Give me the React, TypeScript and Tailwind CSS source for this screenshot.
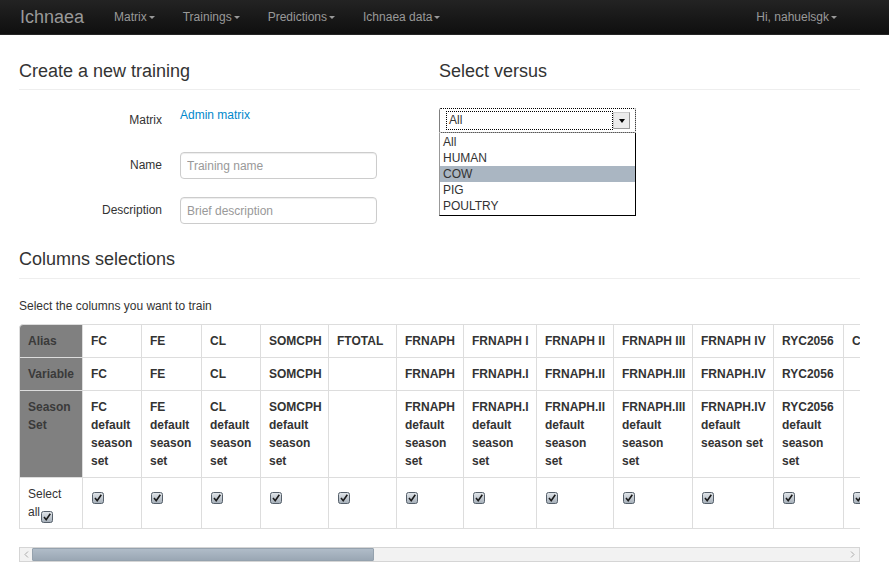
import React from 'react';

type Col = {
  alias: string;
  variable: string;
  season: string[];
  w: string;
};

const columns: Col[] = [
  { alias: 'FC', variable: 'FC', season: ['FC', 'default', 'season', 'set'], w: 'w-[59px]' },
  { alias: 'FE', variable: 'FE', season: ['FE', 'default', 'season', 'set'], w: 'w-[60px]' },
  { alias: 'CL', variable: 'CL', season: ['CL', 'default', 'season', 'set'], w: 'w-[59px]' },
  { alias: 'SOMCPH', variable: 'SOMCPH', season: ['SOMCPH', 'default', 'season', 'set'], w: 'w-[68px]' },
  { alias: 'FTOTAL', variable: '', season: [], w: 'w-[68px]' },
  { alias: 'FRNAPH', variable: 'FRNAPH', season: ['FRNAPH', 'default', 'season', 'set'], w: 'w-[67px]' },
  { alias: 'FRNAPH I', variable: 'FRNAPH.I', season: ['FRNAPH.I', 'default', 'season', 'set'], w: 'w-[73px]' },
  { alias: 'FRNAPH II', variable: 'FRNAPH.II', season: ['FRNAPH.II', 'default', 'season', 'set'], w: 'w-[77px]' },
  { alias: 'FRNAPH III', variable: 'FRNAPH.III', season: ['FRNAPH.III', 'default', 'season', 'set'], w: 'w-[79px]' },
  { alias: 'FRNAPH IV', variable: 'FRNAPH.IV', season: ['FRNAPH.IV', 'default', 'season set'], w: 'w-[81px]' },
  { alias: 'RYC2056', variable: 'RYC2056', season: ['RYC2056', 'default', 'season', 'set'], w: 'w-[70px]' },
  { alias: 'CP', variable: '', season: [], w: 'w-[90px]' },
];

const navItems = ['Matrix', 'Trainings', 'Predictions', 'Ichnaea data'];
const versusOptions = ['All', 'HUMAN', 'COW', 'PIG', 'POULTRY'];

function Caret() {
  return (
    <span className="inline-block w-0 h-0 ml-[2px] align-middle border-x-[3px] border-x-transparent border-t-[3px] border-t-[#999]" />
  );
}

function CheckBox() {
  return (
    <svg width="12" height="12" viewBox="0 0 12 12" className="inline-block">
      <defs>
        <linearGradient id="cbg" x1="0" y1="0" x2="0" y2="1">
          <stop offset="0" stopColor="#e3e7eb" />
          <stop offset="1" stopColor="#a4aeb8" />
        </linearGradient>
      </defs>
      <rect x="0.5" y="0.5" width="11" height="11" rx="2" fill="url(#cbg)" stroke="#56606b" />
      <path d="M3 6.1 L5.2 8.7 L9.3 2.7" fill="none" stroke="#1a1a1a" strokeWidth="1.6" />
    </svg>
  );
}

const cell = 'border-r border-b border-[#ddd] px-[8px] py-[7px] align-top leading-[18px] whitespace-nowrap';
const head = 'border-l bg-[#808080] text-[#3a3a3a] font-bold';

export default function App() {
  return (
    <div className="w-[889px] h-[579px] bg-white text-[#333] text-[12px] overflow-hidden" style={{ fontFamily: '"Liberation Sans", Arial, sans-serif' }}>
      {/* Navbar */}
      <div className="h-[35px] flex items-center bg-gradient-to-b from-[#232323] to-[#0f0f0f] border-b border-[#252525]">
        <span className="ml-[20px] text-[18px] text-[#999]">Ichnaea</span>
        <ul className="flex ml-[16px]">
          {navItems.map((n) => (
            <li key={n} className="px-[14px] text-[12px] text-[#999]">
              {n}
              <Caret />
            </li>
          ))}
        </ul>
        <div className="ml-auto mr-[38px] px-[14px] text-[12px] text-[#999]">
          Hi, nahuelsgk
          <Caret />
        </div>
      </div>

      <div className="pl-[19px] w-[860px]">
        {/* Page headers */}
        <div className="flex pt-[25px] pb-[7px] border-b border-[#eee]">
          <h3 className="w-[420px] text-[18px] leading-[22px]">Create a new training</h3>
          <h3 className="text-[18px] leading-[22px]">Select versus</h3>
        </div>

        <div className="flex">
          {/* Form */}
          <div className="w-[420px] mt-[17px] flex flex-col gap-[18px]">
            <div className="flex items-start h-[27px]">
              <label className="w-[143px] text-right pt-[5px] leading-[17px]">Matrix</label>
              <a className="ml-[18px] leading-[17px] text-[#0088cc]">Admin matrix</a>
            </div>
            <div className="flex items-start h-[27px]">
              <label className="w-[143px] text-right pt-[5px] leading-[17px]">Name</label>
              <input
                placeholder="Training name"
                className="ml-[18px] w-[197px] h-[27px] px-[6px] border border-[#ccc] rounded-[4px] text-[12px] placeholder:text-[#999] shadow-[inset_0_1px_1px_rgba(0,0,0,0.075)] outline-none"
              />
            </div>
            <div className="flex items-start h-[27px]">
              <label className="w-[143px] text-right pt-[5px] leading-[17px]">Description</label>
              <input
                placeholder="Brief description"
                className="ml-[18px] w-[197px] h-[27px] px-[6px] border border-[#ccc] rounded-[4px] text-[12px] placeholder:text-[#999] shadow-[inset_0_1px_1px_rgba(0,0,0,0.075)] outline-none"
              />
            </div>
          </div>

          {/* Versus select, open */}
          <div className="mt-[18px] w-[197px]">
            <div className="h-[25px] border border-dotted border-black rounded-[2px] bg-white flex pl-[6px] pr-[5px] py-[2px]">
              <div className="flex-1 border border-dotted border-black leading-[17px] pl-[2px] text-[12px] text-[#333]">All</div>
              <div className="w-[17px] mt-[1px] mb-[1px] bg-[#ececec] border border-[#ccc] border-r-[#999] border-b-[#999] flex items-center justify-center">
                <span className="w-0 h-0 border-x-[3px] border-x-transparent border-t-[4px] border-t-black" />
              </div>
            </div>
            <ul className="border-l border-l-[#999] border-r border-b border-black pt-[1px] pb-[1px]">
              {versusOptions.map((o) => (
                <li
                  key={o}
                  className={o === 'COW' ? 'h-[16px] leading-[16px] pl-[3px] bg-[#aab6c2] text-[#333]' : 'h-[16px] leading-[16px] pl-[3px] text-[#333]'}
                >
                  {o}
                </li>
              ))}
            </ul>
          </div>
        </div>

        {/* Columns selections */}
        <div className="mt-[24px] pb-[8px] border-b border-[#eee]">
          <h3 className="text-[18px] leading-[22px]">Columns selections</h3>
        </div>
        <p className="mt-[18px] mb-[9px] leading-[18px]">Select the columns you want to train</p>

        <div className="w-[841px] overflow-hidden">
          <table className="table-fixed border-separate border-spacing-0 w-[915px] mb-[18px] text-[12px]">
            <colgroup>
              <col className="w-[64px]" />
              {columns.map((c, i) => (
                <col key={i} className={c.w} />
              ))}
            </colgroup>
            <tbody>
              <tr>
                <td className={`${cell} ${head} border-t rounded-tl-[4px]`}>Alias</td>
                {columns.map((c, i) => (
                  <td key={i} className={`${cell} border-t font-bold`}>{c.alias}</td>
                ))}
              </tr>
              <tr>
                <td className={`${cell} ${head}`}>Variable</td>
                {columns.map((c, i) => (
                  <td key={i} className={`${cell} font-bold`}>{c.variable}</td>
                ))}
              </tr>
              <tr>
                <td className={`${cell} ${head}`}>
                  Season
                  <br />
                  Set
                </td>
                {columns.map((c, i) => (
                  <td key={i} className={`${cell} font-bold`}>
                    {c.season.map((l, j) => (
                      <div key={j}>{l}</div>
                    ))}
                  </td>
                ))}
              </tr>
              <tr>
                <td className={`${cell} border-l`}>
                  <div className="h-[18px]">Select</div>
                  <div className="h-[18px] flex items-start">
                    <span>all</span>
                    <span className="mt-[7px] ml-[1px] h-[12px] leading-[12px]">
                      <CheckBox />
                    </span>
                  </div>
                </td>
                {columns.map((c, i) => (
                  <td key={i} className={cell}>
                    <div className="mt-[6px] ml-[1px] h-[12px] leading-[12px]">
                      <CheckBox />
                    </div>
                  </td>
                ))}
              </tr>
            </tbody>
          </table>
        </div>

        {/* Horizontal scrollbar */}
        <div className="w-[841px] h-[15px] bg-[#f2f2f2] border border-[#d5d5d5] flex items-stretch">
          <div className="w-[12px] flex items-center justify-center">
            <svg width="5" height="7" viewBox="0 0 5 7">
              <path d="M4 0.5 L1 3.5 L4 6.5" fill="none" stroke="#aaa" strokeWidth="1" />
            </svg>
          </div>
          <div className="w-[342px] bg-gradient-to-b from-[#b0bcc8] to-[#9aa7b4] border border-[#95a2ae] rounded-[1px]" />
          <div className="flex-1" />
          <div className="w-[14px] flex items-center justify-center">
            <svg width="5" height="7" viewBox="0 0 5 7">
              <path d="M1 0.5 L4 3.5 L1 6.5" fill="none" stroke="#aaa" strokeWidth="1" />
            </svg>
          </div>
        </div>
      </div>
    </div>
  );
}
